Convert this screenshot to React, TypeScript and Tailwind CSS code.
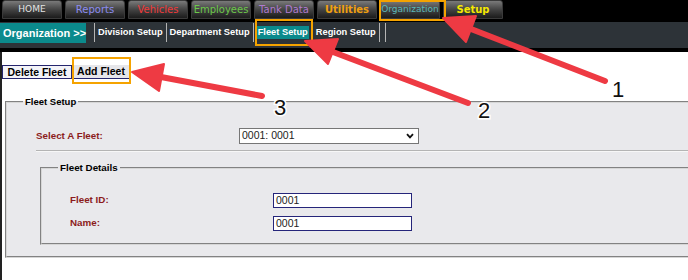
import React from 'react';

const tabs = [
  { label: 'HOME', color: 'text-[#e4e4e4]', extra: 'text-[9px]' },
  { label: 'Reports', color: 'text-[#8c8cf0]', extra: 'text-[10px]' },
  { label: 'Vehicles', color: 'text-[#f03a3a]', extra: 'text-[10px]' },
  { label: 'Employees', color: 'text-[#6cc84a]', extra: 'text-[10px]' },
  { label: 'Tank Data', color: 'text-[#b07ad0]', extra: 'text-[10px]' },
  { label: 'Utilities', color: 'text-[#f0a010]', extra: 'text-[10px] font-bold' },
  { label: 'Organization', color: 'text-[#5ab8b8]', extra: 'text-[9px]' },
  { label: 'Setup', color: 'text-[#f4e800]', extra: 'text-[10px] font-bold' },
];

const Sep = () => <div className="mt-[1px] h-[19px] w-px bg-[#b4b4b4]" />;

const Arrows = () => (
  <svg className="pointer-events-none absolute left-0 top-0" width="688" height="280" viewBox="0 0 688 280">
    {/* highlight boxes */}
    <rect x="380" y="1" width="65" height="19" fill="none" stroke="#f5a300" strokeWidth="2" />
    <rect x="256" y="20" width="56" height="25" fill="none" stroke="#f5a300" strokeWidth="2" />
    <rect x="73" y="58" width="57" height="25" fill="none" stroke="#f5a300" strokeWidth="2" />

    <g stroke="#ee3a43" strokeWidth="6" strokeLinecap="round" fill="none">
      <line x1="605" y1="81" x2="471" y2="29" />
      <line x1="468" y1="103" x2="333" y2="52" />
      <line x1="262" y1="96" x2="161" y2="77" />
    </g>
    <g fill="#ee3a43" stroke="#ee3a43" strokeWidth="2" strokeLinejoin="round">
      <polygon points="443,18 476,16 466,42" />
      <polygon points="305,41 338,39 328,64" />
      <polygon points="132,72 164,64 159,91" />
    </g>
    <g
      fontFamily="'Liberation Sans', Arial, sans-serif"
      fontSize="22"
      textAnchor="middle"
      fill="#111"
      stroke="#fff"
      strokeWidth="3"
      style={{ paintOrder: 'stroke' }}
    >
      <text x="618" y="97">1</text>
      <text x="484" y="118">2</text>
      <text x="280" y="115">3</text>
    </g>
  </svg>
);

export default function App() {
  return (
    <div className="relative h-[280px] w-[688px] overflow-hidden bg-white font-['Liberation_Sans',Arial,sans-serif]">
      {/* main tabs */}
      <div className="flex h-[22px] gap-[3px] bg-black pl-[2px]">
        {tabs.map((t) => (
          <div
            key={t.label}
            className={`flex h-[19px] w-[60px] items-center justify-center rounded-t-[3px] border border-[#3a3a3a] bg-gradient-to-b from-[#7a7a7a] via-[#444] to-[#1c1c1c] font-['DejaVu_Sans',Verdana,sans-serif] leading-none ${t.color} ${t.extra}`}
          >
            {t.label}
          </div>
        ))}
      </div>

      {/* sub nav */}
      <div className="flex h-[26px] items-start bg-[#2d3338] text-[9.3px] font-bold leading-none whitespace-nowrap text-white">
        <div className="mt-[1px] flex h-[20px] w-[86px] items-center bg-[#0b8a8c] pl-[3px] text-[11px]">
          Organization &gt;&gt;
        </div>
        <div className="ml-[8px] flex">
          <Sep />
          <div className="flex h-[21px] items-center px-[3px]">Division Setup</div>
          <Sep />
          <div className="flex h-[21px] items-center px-[3px]">Department Setup</div>
          <Sep />
          <div className="flex h-[21px] items-center px-[3px]">
            <span className="bg-[#0b8a8c] px-px py-[2px]">Fleet Setup</span>
          </div>
          <Sep />
          <div className="flex h-[21px] items-center px-[3px]">Region Setup</div>
          <Sep />
          <div className="w-[5px]" />
          <Sep />
        </div>
      </div>
      <div className="h-[4px] bg-black" />

      {/* body */}
      <div className="h-[228px] border-l-2 border-[#222] pt-[13px]">
        <div className="flex text-[10.5px] font-bold leading-none text-black">
          <div className="flex h-[14px] w-[70px] items-center justify-center border border-[#26266e] bg-[#f4f4f8]">
            Delete Fleet
          </div>
          <div className="ml-px flex h-[14px] w-[56px] items-center justify-center border-b border-[#26266e] bg-[#e6e6ea]">
            Add Fleet
          </div>
        </div>

        <fieldset className="ml-[3px] mt-[16px] w-[700px] border-2 border-[#d6d6d6] bg-[#e9e9ec] pb-[11px] [border-style:groove]">
          <legend className="ml-[16px] px-[2px] text-[9.5px] font-bold leading-[13px] text-black">Fleet Setup</legend>

          <div className="mt-[20px] flex items-center">
            <label className="ml-[29px] w-[203px] text-[9.8px] font-bold text-[#8c1c1c]">Select A Fleet:</label>
            <div className="flex h-[16px] w-[180px] items-center justify-between border border-[#767676] bg-white pl-[2px] pr-[4px] text-[10.5px] text-[#222]">
              <span>0001: 0001</span>
              <svg width="8" height="6" viewBox="0 0 8 6">
                <path d="M1 1.2 L4 4.4 L7 1.2" fill="none" stroke="#111" strokeWidth="1.8" />
              </svg>
            </div>
          </div>

          <div className="ml-[29px] mt-[6px] h-[2px] border-t border-b border-t-[#b4b4b4] border-b-[#f7f7f7]" />

          <fieldset className="ml-[33px] mt-[9px] border-2 border-[#d6d6d6] pb-[12px] [border-style:groove]">
            <legend className="ml-[16px] px-[2px] text-[9.8px] font-bold leading-[13px] text-black">Fleet Details</legend>
            <div className="mt-[19px] flex items-center">
              <label className="ml-[28px] w-[203px] text-[9.8px] font-bold text-[#8c1c1c]">Fleet ID:</label>
              <div className="flex h-[15px] w-[139px] items-center border-[1.5px] border-[#25257a] bg-white pl-[2px] text-[10.5px] text-[#222]">
                0001
              </div>
            </div>
            <div className="mt-[8px] flex items-center">
              <label className="ml-[28px] w-[203px] text-[9.8px] font-bold text-[#8c1c1c]">Name:</label>
              <div className="flex h-[15px] w-[139px] items-center border-[1.5px] border-[#25257a] bg-white pl-[2px] text-[10.5px] text-[#222]">
                0001
              </div>
            </div>
          </fieldset>
        </fieldset>
      </div>

      <Arrows />
    </div>
  );
}
